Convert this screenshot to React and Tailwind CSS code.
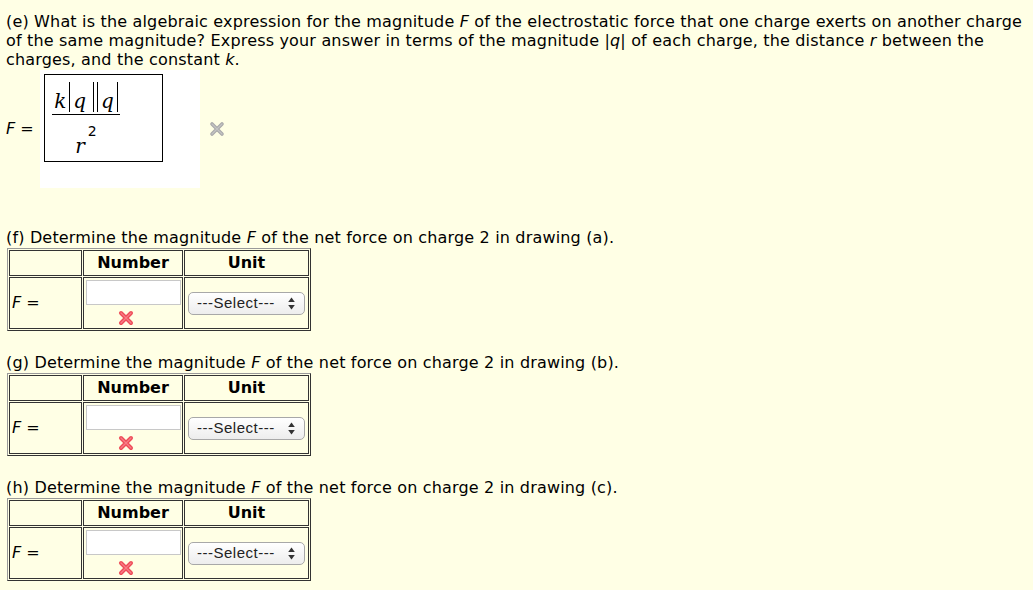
import React from 'react';

const GrayX = () => (
    <svg width="16" height="16" viewBox="0 0 16 16" className="block">
        <path d="M3 3 L13 13 M13 3 L3 13" stroke="#a9a9a9" strokeWidth="3.6" strokeLinecap="round" />
        <path d="M3 3 L13 13 M13 3 L3 13" stroke="#c4c4c4" strokeWidth="1.2" strokeLinecap="round" />
    </svg>
);

const RedX = () => (
    <svg width="18" height="16" viewBox="0 0 18 16" className="block">
        <path d="M4 3 L14 13 M14 3 L4 13" stroke="#ee4b57" strokeWidth="4" strokeLinecap="round" />
        <path d="M4 3 L14 13 M14 3 L4 13" stroke="#f77d86" strokeWidth="1.3" strokeLinecap="round" />
    </svg>
);

const Arrows = () => (
    <svg width="7" height="13" viewBox="0 0 7 13" className="block">
        <path d="M3.5 0.5 L6.8 5 L0.2 5 Z" fill="#333" />
        <path d="M3.5 12.5 L6.8 8 L0.2 8 Z" fill="#333" />
    </svg>
);

const Bar = ({ className = '' }) => (
    <span className={`inline-block w-px h-[30px] bg-black ${className}`} />
);

const Question = ({ children, className = '' }) => (
    <p className={`leading-[19px] tracking-[0.17px] whitespace-nowrap ${className}`}>{children}</p>
);

const AnswerTable = () => (
    <table className="ml-[1px] mt-[1px] border-separate border-spacing-[1px] border border-t-[#999] border-l-[#999] border-b-[#333] border-r-[#333] table-fixed">
        <tbody>
            <tr className="h-[24px]">
                <td className="w-[73px] border border-[#333] p-0"></td>
                <td className="w-[100px] border border-[#333] p-0 text-center font-bold">Number</td>
                <td className="w-[125px] border border-[#333] p-0 text-center font-bold">Unit</td>
            </tr>
            <tr className="h-[52px]">
                <td className="border border-[#333] p-0 pl-[2px] align-middle">
                    <i>F</i> =
                </td>
                <td className="border border-[#333] p-0 align-top">
                    <div className="mt-[2px] ml-[2px] w-[95px] h-[25px] bg-white border border-[#c8c8c8]" />
                    <div className="ml-[33px] mt-[5px]"><RedX /></div>
                </td>
                <td className="border border-[#333] p-0 align-middle">
                    <div className="mx-auto w-[117px] h-[23px] rounded-[5px] border border-[#a8a8a8] bg-gradient-to-b from-white to-[#ededed] flex items-center justify-between pl-[8px] pr-[9px] font-['Liberation_Sans',sans-serif] text-[15px] tracking-[0.5px] text-[#222]">
                        <span>---Select---</span>
                        <Arrows />
                    </div>
                </td>
            </tr>
        </tbody>
    </table>
);

export default function App() {
    return (
        <div className="min-h-screen bg-[#ffffe5] pt-[12px] pl-[6px] font-['DejaVu_Sans',sans-serif] text-[16px] text-black">
            <Question>
                (e) What is the algebraic expression for the magnitude <i>F</i> of the electrostatic force that one charge exerts on another charge<br />
                of the same magnitude? Express your answer in terms of the magnitude |<i>q</i>| of each charge, the distance <i>r</i> between the<br />
                charges, and the constant <i>k</i>.
            </Question>

            <div className="flex items-center mt-[1px]">
                <span className="w-[34px]"><i>F</i> =</span>
                <div className="w-[160px] h-[118px] bg-white pt-[4px] pl-[4px]">
                    <div className="w-[119px] h-[88px] border border-black pt-[7px] pl-[7px]">
                        <div className="w-[68px] font-['DejaVu_Serif',serif] italic text-[20px]">
                            <div className="flex items-end justify-center gap-[3px] h-[33px] pb-[2px] border-b border-black leading-none">
                                <span className="mb-[1px]">k</span>
                                <Bar />
                                <span className="mb-[1px]">q</span>
                                <Bar className="ml-[4px]" />
                                <Bar />
                                <span className="mb-[1px]">q</span>
                                <Bar />
                            </div>
                            <div className="flex items-start justify-center pt-[9px] leading-none">
                                <span className="mt-[12px]">r</span>
                                <span className="not-italic font-['DejaVu_Sans',sans-serif] text-[14px] ml-[3px]">2</span>
                            </div>
                        </div>
                    </div>
                </div>
                <div className="ml-[9px]"><GrayX /></div>
            </div>

            <Question className="mt-[40px]">(f) Determine the magnitude <i>F</i> of the net force on charge 2 in drawing (a).</Question>
            <AnswerTable />

            <Question className="mt-[22px]">(g) Determine the magnitude <i>F</i> of the net force on charge 2 in drawing (b).</Question>
            <AnswerTable />

            <Question className="mt-[22px]">(h) Determine the magnitude <i>F</i> of the net force on charge 2 in drawing (c).</Question>
            <AnswerTable />
        </div>
    );
}
